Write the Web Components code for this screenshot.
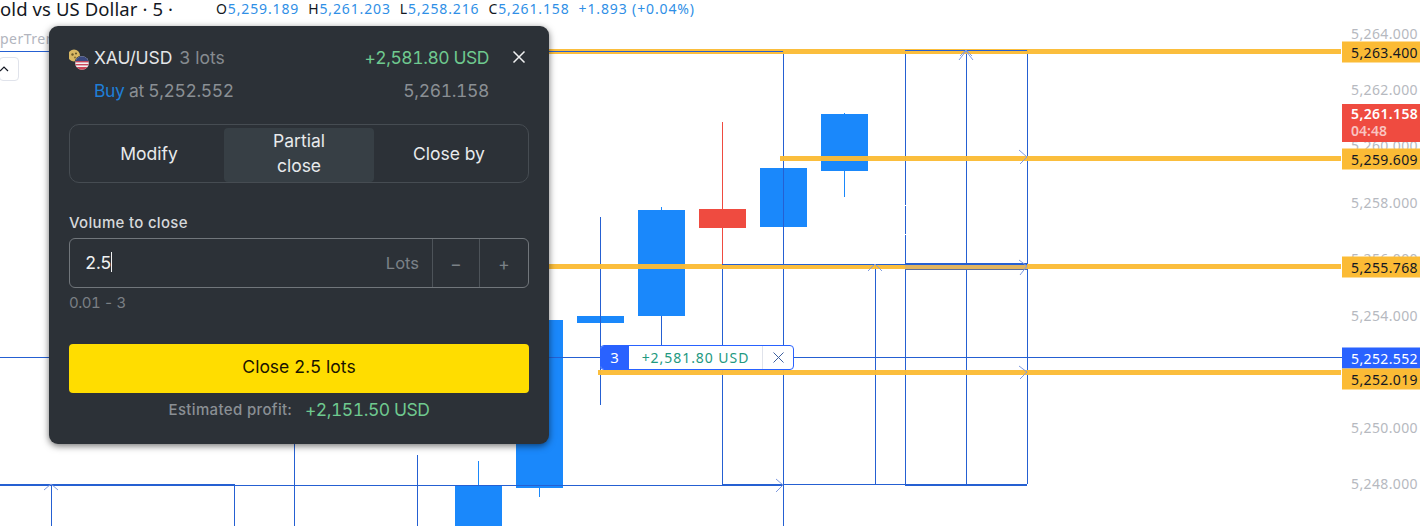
<!DOCTYPE html>
<html lang="en">
<head>
<meta charset="utf-8">
<title>XAU/USD partial close</title>
<style>
    html, body { margin: 0; padding: 0; background: #ffffff; }
</style>
</head>
<body>
<chart-view>
    <chart-legend slot="pane"></chart-legend>
    <chart-canvas slot="pane"></chart-canvas>
    <position-badge slot="pane" qty="3" profit="+2,581.80 USD"></position-badge>

    <price-axis slot="axis">
        <price-tag y="33" kind="grid">5,264.000</price-tag>
        <price-tag y="89" kind="grid">5,262.000</price-tag>
        <price-tag y="145" kind="grid">5,260.000</price-tag>
        <price-tag y="202" kind="grid">5,258.000</price-tag>
        <price-tag y="258" kind="grid">5,256.000</price-tag>
        <price-tag y="315" kind="grid">5,254.000</price-tag>
        <price-tag y="427" kind="grid">5,250.000</price-tag>
        <price-tag y="483" kind="grid">5,248.000</price-tag>
        <price-tag y="51.5" kind="order">5,263.400</price-tag>
        <price-tag y="158.5" kind="order">5,259.609</price-tag>
        <price-tag y="266.5" kind="order">5,255.768</price-tag>
        <price-tag y="357.5" kind="entry">5,252.552</price-tag>
        <price-tag y="378.5" kind="order">5,252.019</price-tag>
        <price-tag y="123" kind="last">5,261.158<span slot="sub">04:48</span></price-tag>
    </price-axis>

    <position-dialog slot="pane">
        <tab-switch></tab-switch>
        <volume-field></volume-field>
    </position-dialog>
</chart-view>

<script>
class ChartView extends HTMLElement {
    constructor() {
        super();
        this.attachShadow({ mode: 'open' });
        this.shadowRoot.innerHTML = `
            <style>
                :host {
                    display: grid;
                    grid-template-columns: 1342px 78px;
                    width: 1420px;
                    height: 526px;
                    overflow: hidden;
                    background: #ffffff;
                }
                .pane { position: relative; overflow: visible; }
            </style>
            <div class="pane"><slot name="pane"></slot></div>
            <slot name="axis"></slot>
        `;
    }
}

class ChartLegend extends HTMLElement {
    constructor() {
        super();
        this.attachShadow({ mode: 'open' });
        this.shadowRoot.innerHTML = `
            <style>
                :host {
                    position: absolute;
                    top: 0;
                    left: 0;
                    z-index: 2;
                    display: block;
                    font-family: "Noto Sans", sans-serif;
                    white-space: nowrap;
                }
                .row { display: flex; align-items: center; height: 17px; line-height: 17px; }
                .title { width: 216px; font-size: 18.5px; letter-spacing: .1px; color: #131722; }
                .ohlc { display: flex; font-size: 14px; letter-spacing: .87px; color: #2f8fe6; }
                .ohlc b { font-weight: 400; color: #131722; }
                .ohlc span { margin-right: 9px; }
                .indicator { margin-top: 13px; font-size: 14px; line-height: 18px; letter-spacing: .5px; color: #b2b5be; }
                .toggle {
                    display: flex;
                    align-items: center;
                    width: 20px;
                    height: 24px;
                    margin-top: 9px;
                    margin-left: -1px;
                    box-sizing: border-box;
                    background: #ffffff;
                    border: 1px solid #e0e3eb;
                    border-radius: 4px;
                }
            </style>
            <div class="row">
                <div class="title">old vs US Dollar · 5 ·</div>
                <div class="ohlc">
                    <span><b>O</b>5,259.189</span>
                    <span><b>H</b>5,261.203</span>
                    <span><b>L</b>5,258.216</span>
                    <span><b>C</b>5,261.158</span>
                    <span>+1.893 (+0.04%)</span>
                </div>
            </div>
            <div class="indicator">perTrend</div>
            <div class="toggle">
                <svg width="10" height="8" viewBox="0 0 10 8"><path d="M0 6 L4 2 L8 6" fill="none" stroke="#131722" stroke-width="1.2"/></svg>
            </div>
        `;
    }
}

class ChartCanvas extends HTMLElement {
    constructor() {
        super();
        this.attachShadow({ mode: 'open' });
        this.render();
    }

    render() {
        const line = '#2560d2';
        const arrow = '#7f9be0';
        const up = '#1a88fb';
        const down = '#ef4b40';

        // x, top, height, wick top, wick bottom, colour
        const candles = [
            [455, 485, 41, 461, 526, up],
            [516, 320, 168, 320, 497, up],
            [577, 316, 7, 316, 323, up],
            [638, 210, 106, 207, 345, up],
            [699, 209, 19, 122, 264, down],
            [760, 168, 59, 168, 227, up],
            [821, 114, 57, 113, 197, up]
        ];
        // x, y1, y2
        const vertical = [
            [51, 484, 526], [234, 484, 526], [294, 443, 526], [417, 455, 526],
            [600, 217, 405], [661, 316, 345],
            [722, 265, 485], [783, 51, 526], [875, 265, 484],
            [905, 50, 484], [966, 50, 484], [1027, 50, 484]
        ];
        // y, x1, x2
        const horizontal = [
            [357, 0, 1342], [485, 0, 783], [484, 0, 234], [51, 0, 783], [484, 722, 1027],
            [485, 905, 1027], [50, 905, 1027]
        ];
        // y, x1, x2
        const orders = [
            [51.5, 530, 1341], [158.5, 780, 1341], [266.5, 530, 1341], [372.5, 598, 1341]
        ];
        const arrows = [
            'M776 479 L783 485 L776 492', 'M1019 150 L1027 157 L1020 164',
            'M1019 260 L1027 266 L1020 275', 'M1019 366 L1027 372 L1020 379',
            'M868 271 L875 264 L882 271', 'M44 490 L51 484 L58 490',
            'M959 60 L966 51 L973 60', 'M960 56 L966 50 L972 56'
        ];

        const wicks = candles.map(c =>
            `<rect x="${c[0] + 23}" y="${c[3]}" width="1" height="${c[4] - c[3]}" fill="${c[5]}"/>`).join('');
        const bodies = candles.map(c =>
            `<rect x="${c[0]}" y="${c[1]}" width="47" height="${c[2]}" fill="${c[5]}"/>`).join('');
        const vLines = vertical.map(v =>
            `<rect x="${v[0]}" y="${v[1]}" width="1" height="${v[2] - v[1]}" fill="${line}"/>`).join('');
        const hLines = horizontal.map(h =>
            `<rect x="${h[1]}" y="${h[0]}" width="${h[2] - h[1]}" height="1" fill="${line}"/>`).join('');
        const orderLines = orders.map(o =>
            `<rect x="${o[1]}" y="${o[0] - 2.5}" width="${o[2] - o[1]}" height="5" fill="#fbbb35" fill-opacity=".96"/>`).join('');
        const chevrons = arrows.map(d =>
            `<path d="${d}" fill="none" stroke="${arrow}" stroke-width="1"/>`).join('');

        this.shadowRoot.innerHTML = `
            <style>
                :host { position: absolute; inset: 0; display: block; }
                svg { display: block; }
            </style>
            <svg width="1342" height="526" viewBox="0 0 1342 526">
                ${wicks}
                ${bodies}
                ${vLines}
                <rect x="905" y="205" width="3" height="1" fill="#ffffff"/>
                <rect x="905" y="234" width="3" height="1" fill="#ffffff"/>
                ${orderLines}
                ${hLines}
                <rect x="722" y="264" width="305" height="1" fill="${line}"/>
                <rect x="905" y="263" width="122" height="2" fill="${line}"/>
                <rect x="905" y="269" width="122" height="1" fill="#5c6f9c"/>
                <rect x="905" y="265" width="122" height="4" fill="#e0b460"/>
                <rect x="905" y="484" width="122" height="1" fill="${line}"/>
                ${chevrons}
            </svg>
        `;
    }
}

class PositionBadge extends HTMLElement {
    constructor() {
        super();
        this.attachShadow({ mode: 'open' });
        this.shadowRoot.innerHTML = `
            <style>
                :host {
                    position: absolute;
                    left: 600px;
                    top: 345px;
                    z-index: 1;
                    display: flex;
                    align-items: stretch;
                    box-sizing: border-box;
                    width: 194px;
                    height: 25px;
                    background: #ffffff;
                    border: 1px solid #2962ff;
                    border-radius: 4px;
                    font-family: "Noto Sans", sans-serif;
                    font-size: 14px;
                    line-height: 23px;
                    letter-spacing: .95px;
                    overflow: hidden;
                }
                .qty { width: 28px; background: #2962ff; color: #ffffff; text-align: center; font-size: 15px; }
                .profit { width: 133px; text-align: center; color: #22997f; border-right: 1px solid #e0e3eb; }
                .close { flex: 1; display: flex; align-items: center; justify-content: center; }
            </style>
            <div class="qty">${this.getAttribute('qty')}</div>
            <div class="profit">${this.getAttribute('profit')}</div>
            <div class="close">
                <svg width="11" height="11" viewBox="0 0 11 11"><path d="M.5 .5 L10.5 10.5 M10.5 .5 L.5 10.5" stroke="#3d5f9e" stroke-width="1"/></svg>
            </div>
        `;
    }
}

class PriceAxis extends HTMLElement {
    constructor() {
        super();
        this.attachShadow({ mode: 'open' });
        this.shadowRoot.innerHTML = `
            <style>
                :host { position: relative; display: block; background: #ffffff; }
            </style>
            <slot></slot>
        `;
    }
}

class PriceTag extends HTMLElement {
    constructor() {
        super();
        this.attachShadow({ mode: 'open' });
        const kind = this.getAttribute('kind');
        const themes = {
            grid: 'color: #b6b9c0; background: transparent;',
            order: 'color: #131722; background: #fbbb35;',
            entry: 'color: #ffffff; background: #2962ff;',
            last: 'color: #ffffff; background: #ef4b40; font-weight: 600;'
        };
        const tall = kind === 'last';
        this.shadowRoot.innerHTML = `
            <style>
                :host {
                    position: absolute;
                    left: 0;
                    right: 0;
                    top: ${this.getAttribute('y')}px;
                    transform: translateY(-50%);
                    z-index: ${kind === 'grid' ? 0 : 1};
                    display: block;
                    box-sizing: border-box;
                    padding: ${tall ? '1px' : '0'} 0 0 9px;
                    height: ${tall ? 38 : 21}px;
                    font-family: "Noto Sans", sans-serif;
                    font-size: 14px;
                    letter-spacing: .38px;
                    line-height: ${tall ? 17 : 21}px;
                    white-space: nowrap;
                    ${themes[kind]}
                }
                ::slotted([slot="sub"]) { display: block; color: #f9c4c0; letter-spacing: 0; }
            </style>
            <slot></slot><slot name="sub"></slot>
        `;
    }
}

class PositionDialog extends HTMLElement {
    constructor() {
        super();
        this.attachShadow({ mode: 'open' });
        this.shadowRoot.innerHTML = `
            <style>
                :host {
                    position: absolute;
                    left: 49px;
                    top: 26px;
                    z-index: 3;
                    display: block;
                    box-sizing: border-box;
                    width: 500px;
                    height: 418px;
                    padding: 19px 20px 0;
                    background: #2c3137;
                    border-radius: 9px;
                    box-shadow: 0 2px 7px rgba(0, 0, 0, .55);
                    font-family: Inter, sans-serif;
                    font-size: 17.5px;
                    font-variant-numeric: tabular-nums;
                    line-height: 25px;
                    color: #e8eaec;
                }
                .row { display: flex; align-items: center; justify-content: space-between; height: 25px; padding-right: 40px; }
                .symbol { display: flex; align-items: center; }
                .name { color: #e4e6e8; letter-spacing: -.1px; }
                .lots { margin-left: 7px; color: #868b90; }
                .pnl { color: #6fc98f; letter-spacing: -.45px; }
                .second { margin-top: 8px; padding-left: 25px; color: #8a8f94; letter-spacing: -.35px; }
                .buy { color: #1f7fd8; }
                .close {
                    position: absolute;
                    top: 24px;
                    right: 23px;
                    width: 14px;
                    height: 14px;
                }
                .submit {
                    display: block;
                    width: 100%;
                    height: 49px;
                    margin-top: 31px;
                    padding: 0 0 4px;
                    border: none;
                    border-radius: 4px;
                    background: #ffdd00;
                    color: #1a1400;
                    font: inherit;
                    text-align: center;
                }
                .estimate {
                    display: flex;
                    justify-content: center;
                    align-items: center;
                    gap: 13px;
                    height: 24px;
                    margin-top: 4px;
                }
                .estimate span { color: #8a8f94; font-size: 15px; font-weight: 500; letter-spacing: .35px; }
                .estimate b { color: #6fc98f; font-weight: 400; letter-spacing: -.45px; }
            </style>
            <div class="row">
                <div class="symbol">
                    <svg width="25" height="26" viewBox="0 0 25 26">
                        <circle cx="5" cy="10.5" r="6" fill="#d9b863"/>
                        <circle cx="3.5" cy="9.5" r="1.2" fill="#6b5a2c"/>
                        <circle cx="7" cy="8.5" r="1.1" fill="#6b5a2c"/>
                        <circle cx="6" cy="12.5" r="1.1" fill="#8c7435"/>
                        <circle cx="13" cy="18" r="7.5" fill="#2c3137"/>
                        <clipPath id="flag"><circle cx="13" cy="18" r="6.8"/></clipPath>
                        <g clip-path="url(#flag)">
                            <rect x="6" y="11" width="14" height="14" fill="#f2f2f2"/>
                            <rect x="6" y="16" width="14" height="1.4" fill="#c9475a"/>
                            <rect x="6" y="19" width="14" height="1.4" fill="#c9475a"/>
                            <rect x="6" y="22" width="14" height="3" fill="#c9475a"/>
                            <rect x="6" y="11" width="14" height="5" fill="#3c4a80"/>
                        </g>
                    </svg>
                    <span class="name">XAU/USD</span>
                    <span class="lots">3 lots</span>
                </div>
                <span class="pnl">+2,581.80 USD</span>
            </div>
            <div class="row second">
                <span><span class="buy">Buy</span> at 5,252.552</span>
                <span>5,261.158</span>
            </div>
            <svg class="close" viewBox="0 0 14 14"><path d="M1.5 1.5 L12.5 12.5 M12.5 1.5 L1.5 12.5" stroke="#f0f1f2" stroke-width="1.5"/></svg>
            <slot></slot>
            <button class="submit" type="button">Close 2.5 lots</button>
            <div class="estimate"><span>Estimated profit:</span><b>+2,151.50 USD</b></div>
        `;
    }
}

class TabSwitch extends HTMLElement {
    constructor() {
        super();
        this.attachShadow({ mode: 'open' });
        this.shadowRoot.innerHTML = `
            <style>
                :host {
                    display: grid;
                    grid-template-columns: repeat(3, 1fr);
                    gap: 0;
                    box-sizing: border-box;
                    height: 59px;
                    margin-top: 21px;
                    padding: 3px 4px;
                    border: 1px solid #464c52;
                    border-radius: 10px;
                }
                .tab {
                    display: flex;
                    align-items: center;
                    justify-content: center;
                    text-align: center;
                    padding: 0 25px 4px;
                    border-radius: 4px;
                    color: #e8eaec;
                }
                .active { background: #373f45; }
            </style>
            <div class="tab">Modify</div>
            <div class="tab active">Partial close</div>
            <div class="tab">Close by</div>
        `;
    }
}

class VolumeField extends HTMLElement {
    constructor() {
        super();
        this.attachShadow({ mode: 'open' });
        this.shadowRoot.innerHTML = `
            <style>
                :host { display: block; margin-top: 30px; }
                .label { height: 20px; font-size: 15px; line-height: 20px; font-weight: 500; letter-spacing: .3px; color: #d6d8da; }
                .box {
                    display: flex;
                    align-items: stretch;
                    box-sizing: border-box;
                    height: 50px;
                    margin-top: 5px;
                    border: 1px solid #71767b;
                    border-radius: 6px;
                }
                .value { flex: 1; display: flex; align-items: center; padding: 0 0 2px 15px; letter-spacing: -.4px; color: #f0f1f2; }
                .caret { width: 1px; height: 20px; background: #f0f1f2; }
                .unit { display: flex; align-items: center; padding-right: 13px; font-size: 16.5px; color: #7b8187; }
                .step {
                    width: 46px;
                    display: flex;
                    align-items: center;
                    justify-content: center;
                    border-left: 1px solid #4d5359;
                    color: #7b8187;
                }
                .step:last-child { width: 48px; }
                .range { height: 20px; margin-top: 5px; font-size: 15px; line-height: 20px; letter-spacing: -.5px; color: #7a7f84; }
            </style>
            <div class="label">Volume to close</div>
            <div class="box">
                <div class="value">2.5<span class="caret"></span></div>
                <div class="unit">Lots</div>
                <div class="step">−</div>
                <div class="step">+</div>
            </div>
            <div class="range">0.01 - 3</div>
        `;
    }
}

customElements.define('chart-view', ChartView);
customElements.define('chart-legend', ChartLegend);
customElements.define('chart-canvas', ChartCanvas);
customElements.define('position-badge', PositionBadge);
customElements.define('price-axis', PriceAxis);
customElements.define('price-tag', PriceTag);
customElements.define('position-dialog', PositionDialog);
customElements.define('tab-switch', TabSwitch);
customElements.define('volume-field', VolumeField);
</script>
</body>
</html>
